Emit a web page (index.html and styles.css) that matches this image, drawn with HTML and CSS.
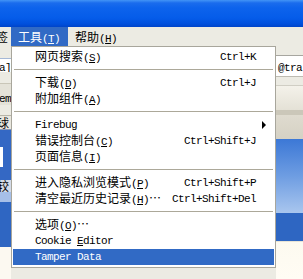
FILE: index.html
```html
<!DOCTYPE html>
<html>
<head>
<meta charset="utf-8">
<link rel="stylesheet" href="styles.css">
</head>
<body>
<div class="win">
  <div class="titlebar"></div>
  <div class="menubar">
    <span class="mb-frag"><span class="frag-in">签</span></span>
    <span class="mb-item active">工具<span class="en">(<u>T</u>)</span></span>
    <span class="mb-item">帮助<span class="en">(<u>H</u>)</span></span>
  </div>
  <div class="content">
    <div class="col left">
      <div class="b l1"></div>
      <div class="b l2"><span class="en">a]</span></div>
      <div class="b l3"></div>
      <div class="b l4"><span class="en">em</span></div>
      <div class="b l5"></div>
      <div class="b l6"><span class="frag-in2">球</span></div>
      <div class="b l7"><span class="wsq"></span></div>
      <div class="b l8"><span class="frag-in3">较</span></div>
      <div class="b l9"></div>
      <div class="b l10"></div>
      <div class="b l11"></div>
    </div>
    <div class="mid"></div>
    <div class="col right">
      <div class="b r1"></div>
      <div class="b rline"></div>
      <div class="b r2"><span class="en">@tra</span></div>
      <div class="b rline2"></div>
      <div class="b r3"></div>
      <div class="b rline3"></div>
      <div class="b r4"></div>
      <div class="b r5"></div>
      <div class="b r6"></div>
      <div class="b r7"></div>
      <div class="b r8"></div>
      <div class="b r9"></div>
    </div>
  </div>

  <div class="menu">
    <div class="mi"><span class="lbl">网页搜索<span class="en">(<u>S</u>)</span></span><span class="acc en">Ctrl+K</span></div>
    <div class="sep"></div>
    <div class="mi"><span class="lbl">下载<span class="en">(<u>D</u>)</span></span><span class="acc en">Ctrl+J</span></div>
    <div class="mi"><span class="lbl">附加组件<span class="en">(<u>A</u>)</span></span></div>
    <div class="sep"></div>
    <div class="mi"><span class="lbl en">Firebug</span><span class="arrow"></span></div>
    <div class="mi"><span class="lbl">错误控制台<span class="en">(<u>C</u>)</span></span><span class="acc en">Ctrl+Shift+J</span></div>
    <div class="mi"><span class="lbl">页面信息<span class="en">(<u>I</u>)</span></span></div>
    <div class="sep"></div>
    <div class="mi"><span class="lbl">进入隐私浏览模式<span class="en">(<u>P</u>)</span></span><span class="acc en">Ctrl+Shift+P</span></div>
    <div class="mi"><span class="lbl">清空最近历史记录<span class="en">(<u>H</u>)</span>…</span><span class="acc en">Ctrl+Shift+Del</span></div>
    <div class="sep"></div>
    <div class="mi"><span class="lbl">选项<span class="en">(<u>O</u>)</span>…</span></div>
    <div class="mi"><span class="lbl en">Cookie <u>E</u>ditor</span></div>
    <div class="mi hl"><span class="lbl en">Tamper Data</span></div>
  </div>
</div>
</body>
</html>
```

FILE: styles.css
```css
html, body {
  margin: 0;
  padding: 0;
}
body {
  width: 303px;
  height: 279px;
  overflow: hidden;
  font-family: "Noto Sans CJK SC", sans-serif;
  font-size: 12px;
  color: #000;
  background: #fff;
}
.win {
  position: relative;
  width: 303px;
  height: 279px;
  overflow: hidden;
  display: flex;
  flex-direction: column;
}
.en {
  font-family: "Liberation Mono", "Noto Sans CJK SC", monospace;
  font-size: 11px;
  letter-spacing: -0.6px;
}
u {
  text-underline-offset: 1px;
}

/* title bar */
.titlebar {
  height: 27px;
  flex: none;
  background: linear-gradient(to bottom, #4294f6 0, #1a6ced 3px, #0d63ec 8px, #055ce9 18px, #004fdc 24px, #0044c8 27px);
}

/* menu bar */
.menubar {
  height: 19px;
  flex: none;
  display: flex;
  align-items: stretch;
  background: #ecebe3;
  line-height: 19px;
}
.mb-frag {
  width: 9px;
  overflow: hidden;
  white-space: nowrap;
}
.frag-in {
  display: inline-block;
  margin-left: -4px;
}
.mb-item {
  padding: 0 8px 0 7px;
  white-space: nowrap;
}
.mb-item.active {
  margin-left: 2px;
  background: #316ac5;
  color: #fff;
}
.mb-item + .mb-item {
  padding-left: 7px;
}

/* background content strips */
.content {
  flex: 1;
  display: flex;
  min-height: 0;
}
.col {
  display: flex;
  flex-direction: column;
  flex: none;
  overflow: hidden;
}
.col.left { width: 11px; }
.col.right { width: 27px; }
.mid { flex: 1; background: #ecebe3; }
.b {
  flex: none;
  overflow: hidden;
  white-space: nowrap;
  position: relative;
}
.l1 { height: 12px; background: #ecebe3; }
.l2 { height: 14px; background: #fff; border-top: 1px solid #a5b8d6; box-sizing: border-box; line-height: 13px; }
.l2 .en { display: inline-block; margin-left: -1px; }
.l3 { height: 11px; background: #ecebe3; }
.l4 { height: 22px; background: #e4e2d8; border-top: 1px solid #c9c6b8; box-sizing: border-box; line-height: 25px; }
.l4 .en { display: inline-block; margin-left: -1px; }
.l5 { height: 10px; background: #ecebe3; }
.l6 { height: 15px; background: #e9e7de; border-top: 1px solid #b8b5a8; border-bottom: 1px solid #8a98b8; box-sizing: border-box; line-height: 13px; }
.frag-in2 { display: inline-block; margin-left: -3px; }
.l7 { height: 50px; background: #3468c4; }
.wsq {
  display: block;
  margin-top: 17px;
  width: 3px;
  height: 20px;
  background: #fff;
}
.l8 { height: 12px; background: #d4dbe8; line-height: 12px; }
.frag-in3 { display: inline-block; margin-left: -3px; }
.l9 { height: 10px; background: #a6bfe8; }
.l10 { height: 45px; background: #2f66c2; }
.l11 { height: 32px; background: #fcf9f1; }

.r1 { height: 9px; background: #ecebe3; }
.rline { height: 1px; background: #a7a6a0; }
.r2 { height: 20px; background: #fff; line-height: 20px; padding-left: 2px; }
.rline2 { height: 1px; background: #bdbbb2; }
.r3 { height: 8px; background: #ecebe3; }
.rline3 { height: 1px; background: #d0cec4; }
.r4 { height: 24px; background: linear-gradient(to bottom, #f4f2ea, #e4e1d6); }
.r5 { height: 5px; background: #cbc7b9; }
.r6 { height: 24px; background: linear-gradient(to bottom, #dfdbcf, #d5d1c4); }
.r7 { height: 74px; background: linear-gradient(to bottom, #3c78d6, #6e9de2 50%, #a9c6ee); }
.r8 { height: 28px; background: #2e66c2; }
.r9 { height: 38px; background: linear-gradient(to bottom, #fdfaf0, #fffcf4); border-top: 1px solid #e8e4d6; box-sizing: border-box; }

/* dropdown menu (overlay) */
.menu {
  position: absolute;
  left: 11px;
  top: 46px;
  width: 265px;
  box-sizing: border-box;
  border: 1px solid #a8a69c;
  background: #fff;
  padding: 2px 1px 2px 1px;
}
.mi {
  display: flex;
  align-items: center;
  height: 16px;
  line-height: 16px;
  padding: 0 8px 0 22px;
  white-space: nowrap;
}
.mi .lbl {
  flex: 1;
}
.mi .acc {
  margin-right: 10px;
}
.mi.hl {
  background: #316ac5;
  color: #fff;
}
.arrow {
  width: 0;
  height: 0;
  border-top: 4px solid transparent;
  border-bottom: 4px solid transparent;
  border-left: 4px solid #000;
}
.sep {
  height: 1px;
  background: #aca899;
  margin: 4px 1px 5px 1px;
}
```
